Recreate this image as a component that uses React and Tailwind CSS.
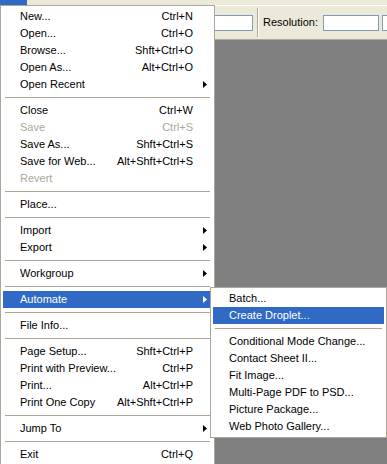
import React from 'react'

// Menu "File" aperto con il sottomenu "Automate" (stile Windows XP)
const voci = [
  { label: 'New...', key: 'Ctrl+N' },
  { label: 'Open...', key: 'Ctrl+O' },
  { label: 'Browse...', key: 'Shft+Ctrl+O' },
  { label: 'Open As...', key: 'Alt+Ctrl+O' },
  { label: 'Open Recent', sub: true },
  { sep: true },
  { label: 'Close', key: 'Ctrl+W' },
  { label: 'Save', key: 'Ctrl+S', off: true },
  { label: 'Save As...', key: 'Shft+Ctrl+S' },
  { label: 'Save for Web...', key: 'Alt+Shft+Ctrl+S' },
  { label: 'Revert', off: true },
  { sep: true },
  { label: 'Place...' },
  { sep: true },
  { label: 'Import', sub: true },
  { label: 'Export', sub: true },
  { sep: true },
  { label: 'Workgroup', sub: true },
  { sep: true },
  { label: 'Automate', sub: true, active: true },
  { sep: true },
  { label: 'File Info...' },
  { sep: true },
  { label: 'Page Setup...', key: 'Shft+Ctrl+P' },
  { label: 'Print with Preview...', key: 'Ctrl+P' },
  { label: 'Print...', key: 'Alt+Ctrl+P' },
  { label: 'Print One Copy', key: 'Alt+Shft+Ctrl+P' },
  { sep: true },
  { label: 'Jump To', sub: true },
  { sep: true },
  { label: 'Exit', key: 'Ctrl+Q' },
]

const automate = [
  { label: 'Batch...' },
  { label: 'Create Droplet...', active: true },
  { sep: true },
  { label: 'Conditional Mode Change...' },
  { label: 'Contact Sheet II...' },
  { label: 'Fit Image...' },
  { label: 'Multi-Page PDF to PSD...' },
  { label: 'Picture Package...' },
  { label: 'Web Photo Gallery...' },
]

function Freccia({ bianca }) {
  return (
    <svg width="4" height="7" viewBox="0 0 4 7" className="absolute right-[5px] top-[5px]">
      <path d="M0 0 L4 3.5 L0 7 Z" fill={bianca ? '#ffffff' : '#000000'} />
    </svg>
  )
}

function Riga({ v, pl }) {
  if (v.sep) {
    return (
      <div className="h-[9px] flex items-center px-[2px]">
        <div className="h-px w-full bg-[#aca899]" />
      </div>
    )
  }
  const colore = v.active ? 'bg-[#316ac5] text-white' : v.off ? 'text-[#aca899]' : 'text-black'
  return (
    <div className={`relative h-[17px] flex items-center ${pl} pr-[19px] ${colore}`}>
      <span className="flex-1 whitespace-nowrap">{v.label}</span>
      {v.key && <span className="whitespace-nowrap">{v.key}</span>}
      {v.sub && <Freccia bianca={v.active} />}
    </div>
  )
}

export default function App() {
  return (
    <div
      className="relative w-[387px] h-[464px] overflow-hidden bg-[#808080] text-[11px] leading-none"
      style={{ fontFamily: '"Liberation Sans", Arial, sans-serif' }}
    >
      {/* barra menu (solo il bordo inferiore è visibile) */}
      <div className="h-[5px] bg-[#ece9d8] flex">
        <div className="w-[27px] h-full bg-[#316ac5]" />
      </div>

      {/* barra opzioni */}
      <div className="h-[35px] bg-[#ece9d8] border-t border-white border-b border-b-[#aca899] flex items-center pl-[180px] overflow-hidden">
        <div className="shrink-0 w-[73px] h-[16px] bg-white border border-[#7f9db9]" />
        <div className="shrink-0 ml-[4px] h-[29px] w-[2px] border-l border-[#aca899] border-r border-r-white" />
        <span className="shrink-0 ml-[4px] text-black whitespace-nowrap">Resolution:</span>
        <div className="shrink-0 ml-[5px] w-[56px] h-[16px] bg-white border border-[#7f9db9]" />
        <div className="shrink-0 ml-[3px] w-[40px] h-[16px] bg-white border border-[#7f9db9] flex items-center pl-[5px] text-black">
          pi
        </div>
      </div>

      {/* menu File */}
      <div className="absolute left-0 top-[5px] w-[215px] h-[470px] bg-white border border-[#aca899] p-[2px]">
        {voci.map((v, i) => (
          <Riga key={i} v={v} pl="pl-[17px]" />
        ))}
      </div>

      {/* sottomenu Automate */}
      <div className="absolute left-[210px] top-[287px] w-[177px] bg-white border border-[#aca899] p-[2px]">
        {automate.map((v, i) => (
          <Riga key={i} v={v} pl="pl-[16px]" />
        ))}
      </div>
    </div>
  )
}
